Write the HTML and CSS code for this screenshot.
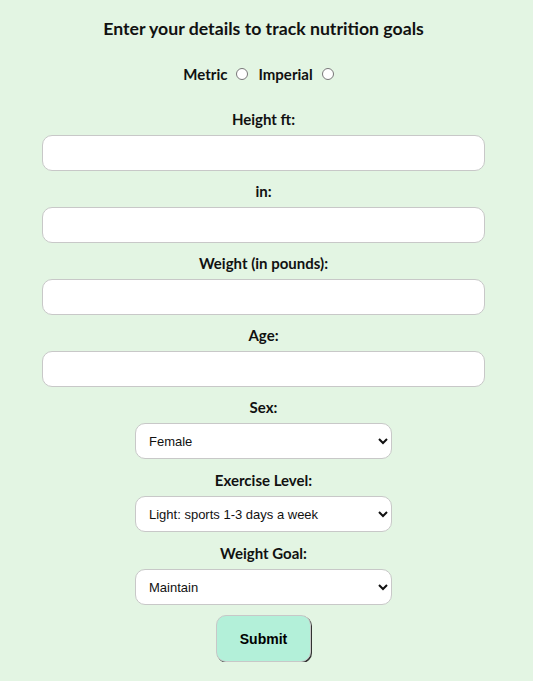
FILE: index.html
```html
<!DOCTYPE html>
<html>
<head>
<meta charset="utf-8">
<link rel="stylesheet" href="styles.css">
</head>
<body>
<form class="form">
  <h3 class="title">Enter your details to track nutrition goals</h3>
  <div class="units">
    <label class="unit">Metric <input type="radio" name="unit" class="radio"></label>
    <label class="unit">Imperial <input type="radio" name="unit" class="radio"></label>
  </div>
  <div class="field first">
    <label class="label">Height ft:</label>
    <input class="text" type="text">
  </div>
  <div class="field">
    <label class="label">in:</label>
    <input class="text" type="text">
  </div>
  <div class="field">
    <label class="label">Weight (in pounds):</label>
    <input class="text" type="text">
  </div>
  <div class="field">
    <label class="label">Age:</label>
    <input class="text" type="text">
  </div>
  <div class="field">
    <label class="label">Sex:</label>
    <select class="select"><option>Female</option><option>Male</option></select>
  </div>
  <div class="field sel">
    <label class="label">Exercise Level:</label>
    <select class="select"><option>Light: sports 1-3 days a week</option></select>
  </div>
  <div class="field sel">
    <label class="label">Weight Goal:</label>
    <select class="select"><option>Maintain</option></select>
  </div>
  <button class="submit" type="button">Submit</button>
</form>
</body>
</html>
```
FILE: styles.css
```css
html, body {
  margin: 0;
  padding: 0;
  background: #e3f5e3;
}
body {
  font-family: Lato, "Open Sans", sans-serif;
  color: #111;
}
.form {
  width: 443px;
  margin: 0 auto;
  padding-right: 6px;
  display: flex;
  flex-direction: column;
  align-items: center;
}
.title {
  font-size: 17.7px;
  font-weight: 700;
  margin: 18px 0 0;
  line-height: 22px;
}
.units {
  display: flex;
  gap: 10px;
  margin-top: 24px;
  padding-right: 10px;
  font-size: 15px;
  font-weight: 700;
  line-height: 20px;
}
.unit {
  display: flex;
  align-items: center;
}
.radio {
  margin: 0 0 0 9px;
  width: 12px;
  height: 12px;
}
.field {
  display: flex;
  flex-direction: column;
  align-items: center;
  width: 100%;
}
.label {
  font-size: 15px;
  font-weight: 700;
  line-height: 20px;
  margin: 10px 0 6px;
}
.field.first .label {
  margin-top: 25px;
}
.field.sel .label {
  margin-top: 11px;
}
.text {
  box-sizing: border-box;
  width: 443px;
  height: 36px;
  border: 1px solid #c8c8c8;
  border-radius: 10px;
  background: #fff;
  padding: 0 10px;
  outline: none;
}
.select {
  box-sizing: border-box;
  width: 257px;
  height: 36px;
  border: 1px solid #c8c8c8;
  border-radius: 10px;
  background: #fff;
  padding: 0 9px;
  font-family: "Liberation Sans", Arial, sans-serif;
  font-size: 13px;
  color: #111;
}
.submit {
  margin-top: 10px;
  width: 95px;
  height: 47px;
  background: #b3f0d9;
  border: 1px solid #c8c8c8;
  border-radius: 10px;
  box-shadow: 1px 1px 0 #333;
  font-family: "Liberation Sans", Arial, sans-serif;
  font-size: 14px;
  font-weight: 700;
  color: #000;
}
```
